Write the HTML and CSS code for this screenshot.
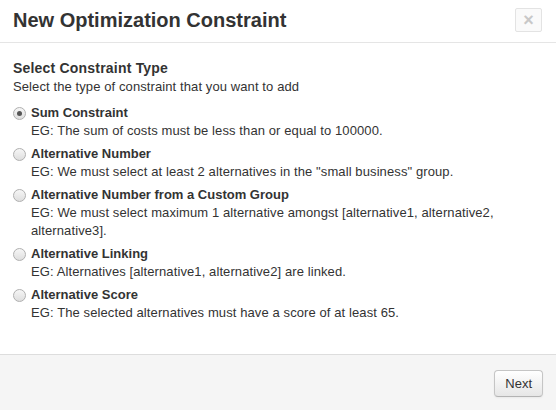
FILE: index.html
```html
<!DOCTYPE html>
<html>
<head>
<meta charset="utf-8">
<link rel="stylesheet" href="styles.css">
</head>
<body>
<div class="modal">
  <div class="modal-header">
    <h3 class="modal-title">New Optimization Constraint</h3>
    <button class="close" type="button">&times;</button>
  </div>
  <div class="modal-body">
    <h4 class="section-title">Select Constraint Type</h4>
    <p class="section-sub">Select the type of constraint that you want to add</p>
    <ul class="options">
      <li class="option">
        <label class="option-title"><input type="radio" name="ctype" checked> Sum Constraint</label>
        <div class="option-desc">EG: The sum of costs must be less than or equal to 100000.</div>
      </li>
      <li class="option">
        <label class="option-title"><input type="radio" name="ctype"> Alternative Number</label>
        <div class="option-desc">EG: We must select at least 2 alternatives in the "small business" group.</div>
      </li>
      <li class="option">
        <label class="option-title"><input type="radio" name="ctype"> Alternative Number from a Custom Group</label>
        <div class="option-desc">EG: We must select maximum 1 alternative amongst [alternative1, alternative2, alternative3].</div>
      </li>
      <li class="option">
        <label class="option-title"><input type="radio" name="ctype"> Alternative Linking</label>
        <div class="option-desc">EG: Alternatives [alternative1, alternative2] are linked.</div>
      </li>
      <li class="option">
        <label class="option-title"><input type="radio" name="ctype"> Alternative Score</label>
        <div class="option-desc">EG: The selected alternatives must have a score of at least 65.</div>
      </li>
    </ul>
  </div>
  <div class="modal-footer">
    <button class="btn" type="button">Next</button>
  </div>
</div>
</body>
</html>
```
FILE: styles.css
```css
html, body {
  margin: 0;
  padding: 0;
  background: #fff;
}
body {
  font-family: "Liberation Sans", Arial, sans-serif;
  color: #333;
}
.modal {
  display: flex;
  flex-direction: column;
  height: 410px;
}
.modal-header {
  display: flex;
  align-items: center;
  justify-content: space-between;
  padding: 8px 14px 10px 13px;
  border-bottom: 1px solid #e5e5e5;
}
.modal-title {
  margin: 0;
  font-size: 20px;
  line-height: 24px;
  font-weight: bold;
  color: #333;
}
.close {
  width: 27px;
  height: 24px;
  padding: 0;
  border: 1px solid #e3e3e3;
  border-radius: 2px;
  background: #fafafa;
  color: #c8c8c8;
  font-family: "Liberation Sans", Arial, sans-serif;
  font-size: 18px;
  font-weight: bold;
  line-height: 20px;
}
.modal-body {
  flex: 1;
  padding: 18px 13px 0;
}
.section-title {
  margin: 0 0 5px;
  font-size: 14px;
  line-height: 14px;
  font-weight: bold;
  letter-spacing: 0.2px;
}
.section-sub {
  margin: 0 0 10px;
  font-size: 13px;
  line-height: 14px;
  letter-spacing: 0.1px;
}
.options {
  list-style: none;
  margin: 0;
  padding: 0;
}
.option {
  margin-bottom: 5px;
  font-size: 13px;
  line-height: 18px;
}
.option-title {
  display: flex;
  align-items: center;
  gap: 5px;
  font-weight: bold;
}
.option-title input {
  appearance: none;
  -webkit-appearance: none;
  width: 13px;
  height: 13px;
  margin: 0;
  border: 1px solid #b0b0b0;
  border-radius: 50%;
  background: linear-gradient(#f6f6f6, #dedede);
  box-sizing: border-box;
  position: relative;
}
.option-title input:checked::after {
  content: "";
  position: absolute;
  left: 3px;
  top: 3px;
  width: 5px;
  height: 5px;
  border-radius: 50%;
  background: #555;
}
.option-desc {
  padding-left: 18px;
  letter-spacing: 0.1px;
}
.modal-footer {
  display: flex;
  justify-content: flex-end;
  padding: 15px 13px 0;
  height: 56px;
  box-sizing: border-box;
  background: #f5f5f5;
  border-top: 1px solid #ddd;
}
.btn {
  height: 27px;
  padding: 0 10px;
  border: 1px solid #c5c5c5;
  border-bottom-color: #b3b3b3;
  border-radius: 4px;
  background: linear-gradient(#ffffff, #e6e6e6);
  box-shadow: inset 0 1px 0 rgba(255,255,255,.2), 0 1px 2px rgba(0,0,0,.05);
  color: #333;
  font-family: "Liberation Sans", Arial, sans-serif;
  font-size: 13px;
  line-height: 20px;
}
```
